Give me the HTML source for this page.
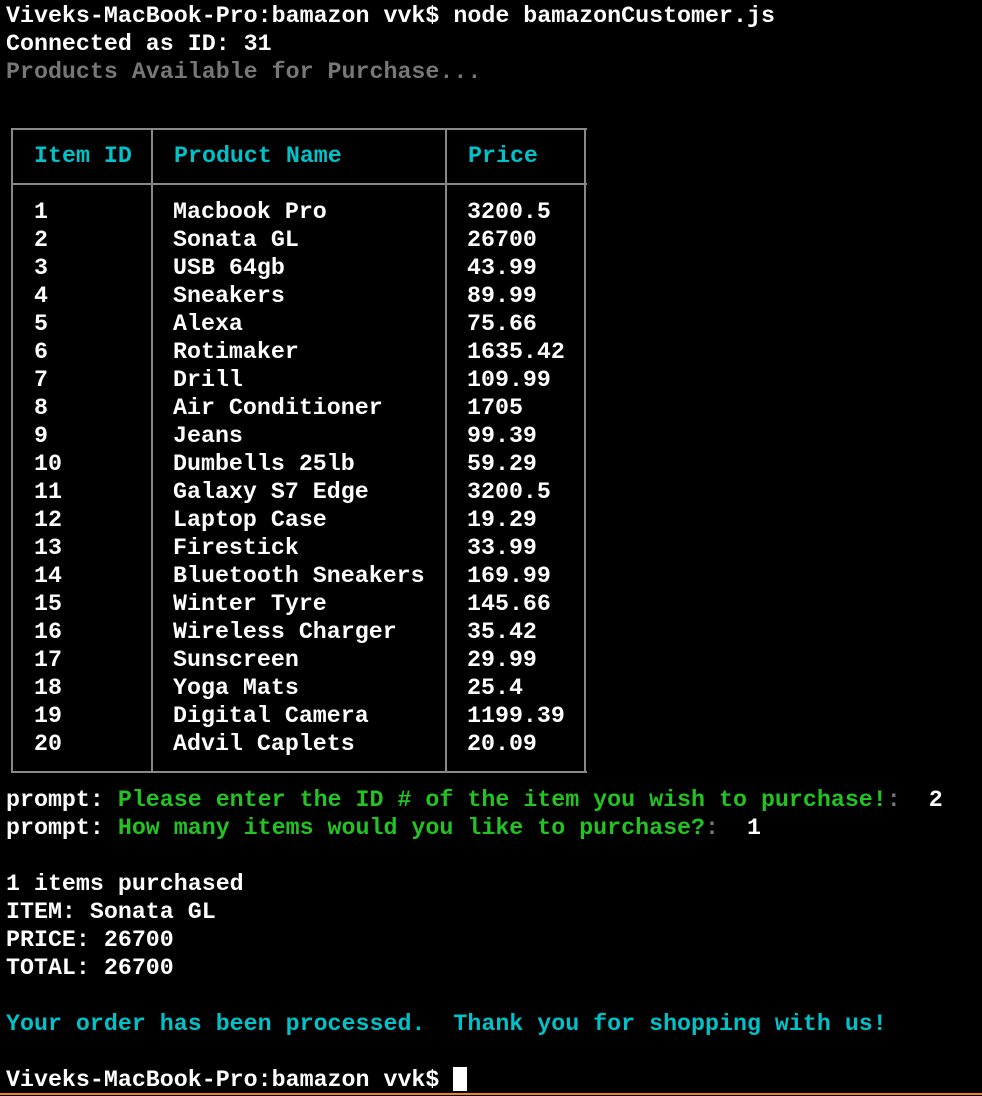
<!DOCTYPE html>
<html><head><meta charset="utf-8"><style>
html,body{margin:0;padding:0;background:#000;width:982px;height:1096px;overflow:hidden;position:relative}
.l{position:absolute;white-space:pre;font-family:"Liberation Mono",monospace;font-weight:bold;font-size:23.3px;line-height:28px;height:28px;color:#fff}
.g{color:#777}.c{color:#00c2c8}.gr{color:#22c322}
.h{position:absolute;background:#888;height:2px}
.v{position:absolute;background:#888;width:2px}
</style></head><body>
<div class="l" style="left:6px;top:2px">Viveks-MacBook-Pro:bamazon vvk$ node bamazonCustomer.js</div>
<div class="l" style="left:6px;top:30px">Connected as ID: 31</div>
<div class="l g" style="left:6px;top:58px">Products Available for Purchase...</div>

<div class="h" style="left:12px;top:128px;width:575px"></div>
<div class="h" style="left:12px;top:183px;width:575px"></div>
<div class="h" style="left:12px;top:771px;width:575px"></div>
<div class="v" style="left:11px;top:128px;height:645px"></div>
<div class="v" style="left:151px;top:128px;height:645px"></div>
<div class="v" style="left:445px;top:128px;height:645px"></div>
<div class="v" style="left:584px;top:128px;height:645px"></div>

<div class="l c" style="left:34px;top:142px">Item ID</div>
<div class="l c" style="left:174px;top:142px">Product Name</div>
<div class="l c" style="left:468px;top:142px">Price</div>

<div class="l" style="left:34px;top:198px">1
2
3
4
5
6
7
8
9
10
11
12
13
14
15
16
17
18
19
20</div>
<div class="l" style="left:173px;top:198px">Macbook Pro
Sonata GL
USB 64gb
Sneakers
Alexa
Rotimaker
Drill
Air Conditioner
Jeans
Dumbells 25lb
Galaxy S7 Edge
Laptop Case
Firestick
Bluetooth Sneakers
Winter Tyre
Wireless Charger
Sunscreen
Yoga Mats
Digital Camera
Advil Caplets</div>
<div class="l" style="left:467px;top:198px">3200.5
26700
43.99
89.99
75.66
1635.42
109.99
1705
99.39
59.29
3200.5
19.29
33.99
169.99
145.66
35.42
29.99
25.4
1199.39
20.09</div>

<div class="l" style="left:6px;top:786px">prompt: <span class="gr">Please enter the ID # of the item you wish to purchase!</span><span class="g">:</span>  2</div>
<div class="l" style="left:6px;top:814px">prompt: <span class="gr">How many items would you like to purchase?</span><span class="g">:</span>  1</div>
<div class="l" style="left:6px;top:870px">1 items purchased</div>
<div class="l" style="left:6px;top:898px">ITEM: Sonata GL</div>
<div class="l" style="left:6px;top:926px">PRICE: 26700</div>
<div class="l" style="left:6px;top:954px">TOTAL: 26700</div>
<div class="l c" style="left:6px;top:1010px">Your order has been processed.  Thank you for shopping with us!</div>
<div class="l" style="left:6px;top:1066px">Viveks-MacBook-Pro:bamazon vvk$</div>
<div style="position:absolute;left:453px;top:1067px;width:14px;height:24px;background:#fff"></div>
<div style="position:absolute;left:0;top:1093px;width:982px;height:2px;background:#f08020"></div>
</body></html>
